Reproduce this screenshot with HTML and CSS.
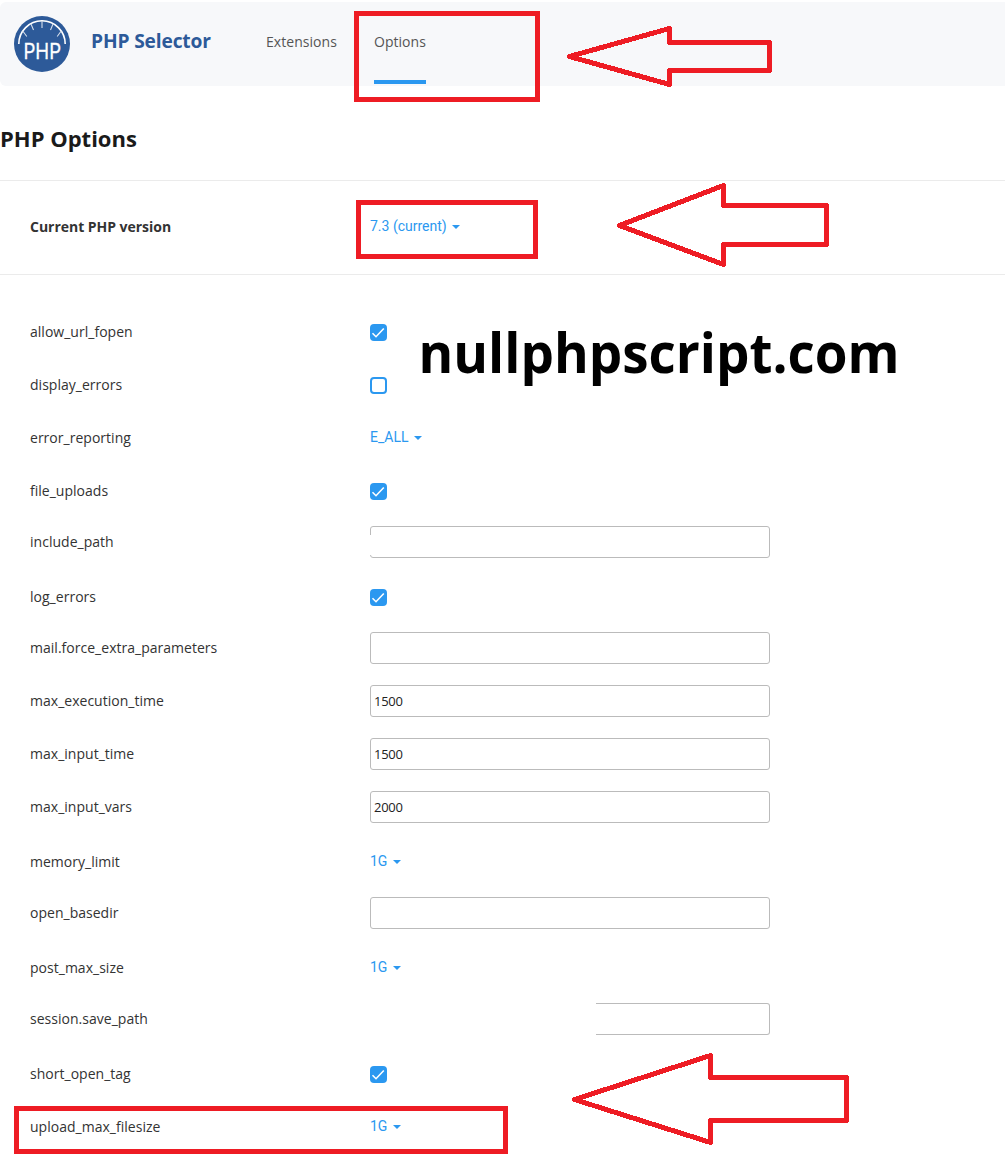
FILE: index.html
```html
<!DOCTYPE html>
<html lang="en">
<head>
<meta charset="utf-8">
<title>PHP Selector</title>
<link rel="stylesheet" href="styles.css">
</head>
<body>
<svg class="defs" width="0" height="0" aria-hidden="true">
  <symbol id="check" viewBox="0 0 17 17"><path d="M2.500 9.300 6 12.700 13.800 4.500" fill="none" stroke="#fff" stroke-width="1.6"/></symbol>
</svg>
<header class="topbar">
  <svg class="logo" viewBox="0 0 56 56">
    <circle cx="28" cy="28" r="28" fill="#2d5a99"/>
    <path d="M4.800 28a23.200 23.200 0 0 1 46.400 0" fill="none" stroke="#fff" stroke-width="1.6"/>
    <path d="M28 5v7M17 8l2.500 6M39 8l-2.500 6M8.800 15l4 5.500M47.200 15l-4 5.500" fill="none" stroke="#d5deeb" stroke-width="1.1"/>
    <text class="logo-text" x="9.500" y="42.500" textLength="37.500" lengthAdjust="spacingAndGlyphs">PHP</text>
  </svg>
  <div class="brand">PHP Selector</div>
  <nav class="tabs">
    <a class="tab">Extensions</a>
    <a class="tab active">Options</a>
  </nav>
</header>
<main>
  <h1 class="title">PHP Options</h1>
  <section class="version">
    <div class="name">Current PHP version</div>
    <div class="select">7.3 (current)<i class="caret"></i></div>
  </section>
  <section class="options">
    <div class="row"><div class="name">allow_url_fopen</div><span class="box on"><svg><use href="#check"/></svg></span></div>
    <div class="row"><div class="name">display_errors</div><span class="box"></span></div>
    <div class="row"><div class="name">error_reporting</div><div class="select">E_ALL<i class="caret"></i></div></div>
    <div class="row"><div class="name">file_uploads</div><span class="box on"><svg><use href="#check"/></svg></span></div>
    <div class="row field"><div class="name">include_path</div><div class="input open-left"></div></div>
    <div class="row"><div class="name">log_errors</div><span class="box on"><svg><use href="#check"/></svg></span></div>
    <div class="row field"><div class="name">mail.force_extra_parameters</div><div class="input"></div></div>
    <div class="row field"><div class="name">max_execution_time</div><div class="input">1500</div></div>
    <div class="row field"><div class="name">max_input_time</div><div class="input">1500</div></div>
    <div class="row field"><div class="name">max_input_vars</div><div class="input">2000</div></div>
    <div class="row"><div class="name">memory_limit</div><div class="select short">1G<i class="caret"></i></div></div>
    <div class="row field"><div class="name">open_basedir</div><div class="input"></div></div>
    <div class="row"><div class="name">post_max_size</div><div class="select short">1G<i class="caret"></i></div></div>
    <div class="row field"><div class="name">session.save_path</div><div class="input partial"></div></div>
    <div class="row"><div class="name">short_open_tag</div><span class="box on"><svg><use href="#check"/></svg></span></div>
    <div class="row"><div class="name">upload_max_filesize</div><div class="select short">1G<i class="caret"></i></div></div>
  </section>
</main>
<svg class="marks" viewBox="0 0 1005 1165">
  <g class="pen">
    <rect x="356.500" y="13.500" width="181" height="86"/>
    <rect x="358.500" y="202.500" width="177" height="54"/>
    <rect x="16.500" y="1108.500" width="489" height="43"/>
    <path d="M569.500 56.500 669.500 28.500V42.500H769.500V70.500H669.500V84.500Z"/>
    <path d="M619.500 225.500 723.500 185.500V205.500H826.500V244.500H723.500V264.500Z"/>
    <path d="M574.500 1099.500 710.500 1055.500V1077.500H846.500V1120.500H710.500V1142.500Z"/>
  </g>
  <text class="watermark" x="418.500" y="373" textLength="481" lengthAdjust="spacingAndGlyphs">nullphpscript.com</text>
</svg>
</body>
</html>
```
FILE: styles.css
```css
* { box-sizing: border-box; }
body {
  margin: 0;
  height: 1165px;
  overflow: hidden;
  position: relative;
  background: #fff;
  color: #333;
  font: 14px/20px "Open Sans", "Noto Sans", sans-serif;
}
.defs { display: block; }
.topbar {
  display: flex;
  margin-top: 2px;
  height: 84px;
  padding-left: 14px;
  background: #f7f8fa;
  border-radius: 6px 0 0 6px;
}
.logo { width: 56px; height: 56px; margin-top: 14px; flex: none; }
.logo-text { font: 400 22px Inter, sans-serif; fill: #fff; stroke: #fff; stroke-width: .3px; }
.brand {
  margin: 25px 0 0 21px;
  width: 175px;
  color: #2d5a99;
  font-size: 19.2px;
  font-weight: 700;
  line-height: 28px;
  letter-spacing: -.15px;
  white-space: nowrap;
}
.tabs { display: flex; gap: 37px; color: #555; }
.tab { height: 82px; padding-top: 30px; letter-spacing: .05px; }
.tab.active { border-bottom: 4px solid #2b98f0; }
.title {
  margin: 0;
  height: 95px;
  padding-top: 37px;
  border-bottom: 1px solid #ebebeb;
  color: #1a1a1a;
  font-size: 22px;
  font-weight: 700;
  line-height: 30px;
}
.version {
  display: flex;
  align-items: center;
  height: 94px;
  padding: 0 0 2px 30px;
  border-bottom: 1px solid #ebebeb;
}
.version .name { font-weight: 700; letter-spacing: -.03px; }
.options { padding: 30px 0 0 30px; }
.row { display: flex; align-items: center; height: 53px; }
.row.field { padding-bottom: 4px; }
.name { width: 340px; flex: none; letter-spacing: .02px; }
.select {
  display: flex;
  align-items: center;
  gap: 5px;
  padding-bottom: 1px;
  color: #2b98f0;
  font-family: Roboto, sans-serif;
}
.select.short { gap: 6px; }
.caret {
  margin-top: 2px;
  border: 4px solid transparent;
  border-top-color: #2b98f0;
  border-bottom: 0;
}
.box {
  width: 17px;
  height: 17px;
  margin-top: 1px;
  border: 2px solid #2b98f0;
  border-radius: 4px;
}
.box.on { border: 0; background: #2b98f0; }
.box svg { display: block; width: 17px; height: 17px; }
.input {
  position: relative;
  width: 400px;
  height: 32px;
  padding: 0 3px;
  border: 1px solid #bbb;
  border-radius: 3px;
  color: #222;
  font-size: 13px;
  line-height: 31px;
  letter-spacing: -.25px;
}
.open-left::before {
  content: "";
  position: absolute;
  left: -1px;
  top: 8px;
  width: 1px;
  height: 20px;
  background: #fff;
}
.partial { width: 174px; margin-left: 226px; border-left: 0; border-radius: 0 3px 3px 0; }
.marks { position: absolute; left: 0; top: 0; width: 1005px; height: 1165px; }
.pen { fill: none; stroke: #ee1c24; stroke-width: 5px; stroke-linejoin: round; shape-rendering: crispEdges; }
.pen rect { stroke-linejoin: miter; }
.watermark { font: 700 56px "Open Sans", sans-serif; fill: #000; }
```
